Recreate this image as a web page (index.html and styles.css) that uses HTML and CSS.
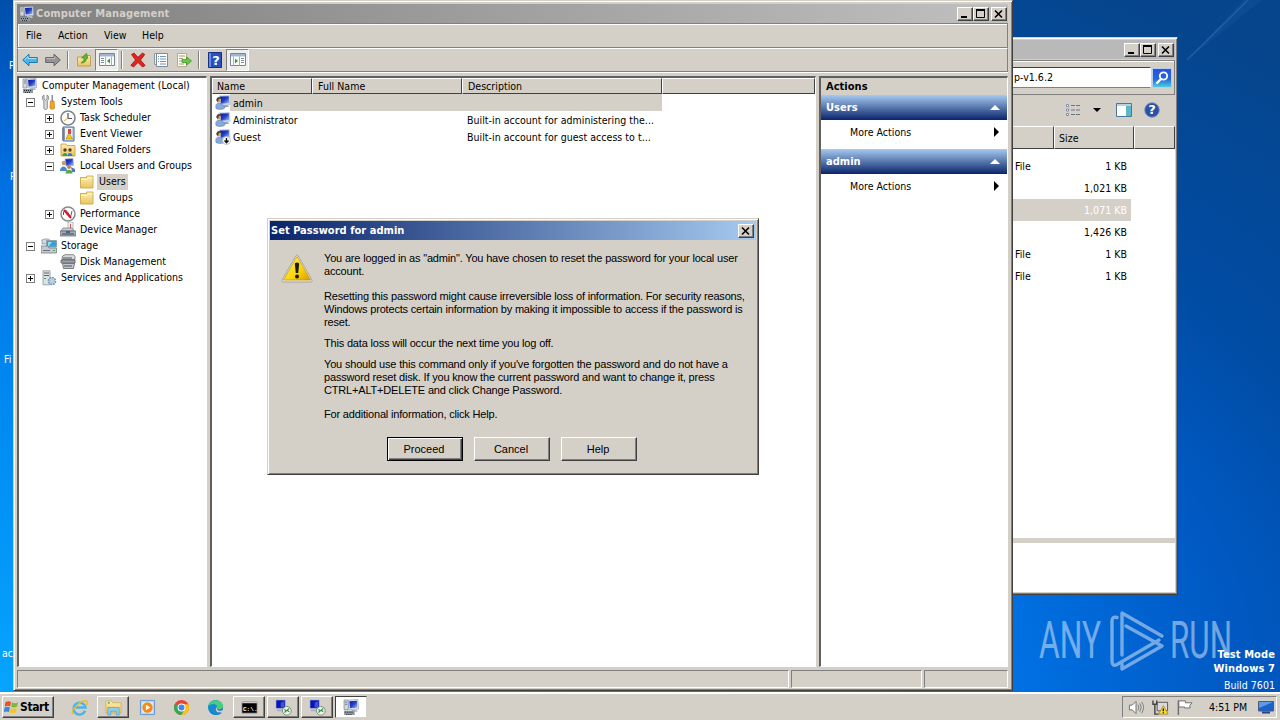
FILE: index.html
```
<!DOCTYPE html>
<html lang="en">
<head>
  <meta charset="utf-8">
  <title>Computer Management</title>
  <link rel="stylesheet" href="styles.css">
</head>
<body>
  <!-- shared icons -->
  <svg class="sprite" width="0" height="0">
    <defs>
      <linearGradient id="g-blue" x1="0" y1="0" x2="1" y2="1">
        <stop offset="0" stop-color="#0a16a0"/><stop offset=".5" stop-color="#2340c8"/><stop offset="1" stop-color="#a9c8f8"/>
      </linearGradient>
      <linearGradient id="g-folder" x1="0" y1="0" x2="0" y2="1">
        <stop offset="0" stop-color="#fdeeb0"/><stop offset="1" stop-color="#eac562"/>
      </linearGradient>
      <linearGradient id="g-yellow" x1="0" y1="0" x2="1" y2="1">
        <stop offset="0" stop-color="#fff36a"/><stop offset=".6" stop-color="#fbd40c"/><stop offset="1" stop-color="#d69a00"/>
      </linearGradient>
      <linearGradient id="g-search" x1="0" y1="0" x2="0" y2="1">
        <stop offset="0" stop-color="#2a50dd"/><stop offset=".55" stop-color="#2467d8"/><stop offset="1" stop-color="#4ed3e4"/>
      </linearGradient>
      <linearGradient id="g-edge" x1="0" y1="0" x2="1" y2="1">
        <stop offset="0" stop-color="#1fa6e0"/><stop offset="1" stop-color="#0c55b4"/>
      </linearGradient>
    </defs>
    <symbol id="i-computer" viewBox="0 0 16 16">
      <path d="M1 1h4v9H1z" fill="#d4d8dd" stroke="#7b8490" stroke-width=".7"/>
      <path d="M2 3h2M2 5h2" stroke="#667" stroke-width=".8"/>
      <path d="M5 1l9-.5.6 9L6 10z" fill="#e6ebf4" stroke="#8a96aa" stroke-width=".6"/>
      <path d="M6 2l7.2-.4.3 6.6L6.7 8.6z" fill="url(#g-blue)"/>
      <path d="M8 10h5l1 2H8z" fill="#b6bcc6"/>
      <path d="M1 11h10v4H1z" fill="#8f969f"/>
      <path d="M2 12h1v1H2zM4 12h1v1H4zM6 12h1v1H6zM8 12h1v1H8zM3 14h1v1H3zM5 14h1v1H5zM7 14h1v1H7z" fill="#26303c"/>
    </symbol>
    <symbol id="i-tools" viewBox="0 0 16 16">
      <path d="M3 1v4l1.5 1.3L6 5V1c2 .8 2.4 4.500 .3 6V14c0 2-3.400 2-3.400 0V7C.8 5.500 1 1.800 3 1z" fill="#d9dcdf" stroke="#72787f" stroke-width=".8"/>
      <path d="M10.500 1h1.500v6h-1.500z" fill="#8a9097"/>
      <path d="M9.500 7h3.500l.5 7c0 1.500-4.500 1.500-4.500 0z" fill="#f5a623" stroke="#c76f08" stroke-width=".7"/>
    </symbol>
    <symbol id="i-clock" viewBox="0 0 16 16">
      <circle cx="8" cy="8" r="7" fill="#fbfbf6" stroke="#7d848c" stroke-width="1.600"/>
      <path d="M8 3v5.500h4" fill="none" stroke="#4c5560" stroke-width="1.200"/>
      <path d="M8 8L4 11" stroke="#e0a84c" stroke-width="1"/>
    </symbol>
    <symbol id="i-event" viewBox="0 0 16 16">
      <path d="M3 1h11v14H3z" fill="#bcd3f0" stroke="#4a6d9d"/>
      <path d="M5 2h7v12H5z" fill="#e8f0fa"/>
      <path d="M2 3h3M2 5h3M2 7h3M2 9h3M2 11h3M2 13h3" stroke="#56616e" stroke-width="1"/>
      <path d="M8 3h3v5H8z" fill="#e04030"/>
      <path d="M6 13l3-6 3.500 6z" fill="#f6c515" stroke="#a97d00" stroke-width=".6"/>
    </symbol>
    <symbol id="i-shared" viewBox="0 0 16 16">
      <path d="M1 2h5l1 1.500h8V14H1z" fill="url(#g-folder)" stroke="#c79a34" stroke-width=".8"/>
      <circle cx="5" cy="8" r="1.700" fill="#5a3c20"/><path d="M2.500 14c0-4 5-4 5 0z" fill="#35a04e"/>
      <circle cx="10" cy="8" r="1.700" fill="#5a3c20"/><path d="M7.500 14c0-4 5-4 5 0z" fill="#3b76d6"/>
    </symbol>
    <symbol id="i-localusers" viewBox="0 0 16 16">
      <path d="M5 1l8-.5.5 7L6 8z" fill="url(#g-blue)" stroke="#a3b2cc" stroke-width=".8"/>
      <circle cx="4" cy="5" r="2.300" fill="#c79a63"/>
      <path d="M0 13c0-6 7-6 7 0z" fill="#4a85d5"/>
      <circle cx="9" cy="9" r="2" fill="#b8864f"/>
      <path d="M5.500 15.500c0-5 7-5 7 0z" fill="#58a846"/>
      <path d="M11 9l4 2v3h-3z" fill="#5675c8"/>
    </symbol>
    <symbol id="i-folder" viewBox="0 0 16 16">
      <path d="M1.500 3.500h6V2h6.500v12H1.500z" fill="url(#g-folder)" stroke="#cda849" stroke-width=".9"/>
      <path d="M2 5.500h6l1-1.500h4.500" fill="none" stroke="#fff8d8" stroke-width=".9"/>
    </symbol>
    <symbol id="i-perf" viewBox="0 0 16 16">
      <circle cx="8" cy="8" r="7" fill="#fff" stroke="#858b91" stroke-width="1.500"/>
      <path d="M3.500 9V6c1-2 3-2 4 0l3 5 1.500-6" fill="none" stroke="#8a4750" stroke-width="1"/>
      <path d="M4 4l7 8" stroke="#cf1a2c" stroke-width="2"/>
    </symbol>
    <symbol id="i-device" viewBox="0 0 16 16">
      <path d="M8 0h5v8H8z" fill="#f4f4f4" stroke="#9a9fa5" stroke-width=".7"/>
      <path d="M10 2h1v4h-1z" fill="#d05050"/>
      <path d="M3 6h9l2 3H1z" fill="#c9cdd2" stroke="#6d747c" stroke-width=".7"/>
      <path d="M0 9h16v5H0z" fill="#a4abb4" stroke="#59616b" stroke-width=".7"/>
      <path d="M2 12h12" stroke="#3d454e"/><path d="M6 9h4v2H6z" fill="#40688e"/>
    </symbol>
    <symbol id="i-storage" viewBox="0 0 16 16">
      <path d="M1 2c3-1.500 6-1.500 8 0v4H1z" fill="#d3d8dc" stroke="#7e868e" stroke-width=".7"/>
      <path d="M5.500 2.500h10V9h-10z" fill="#37a0d8" stroke="#90a0ac"/>
      <path d="M7 4l4 0-3 4H7z" fill="#8ddcf4"/>
      <path d="M0 8h7l1 2h7.500v5H0z" fill="#c6cacf" stroke="#747c84" stroke-width=".8"/>
      <path d="M2 12.500h7" stroke="#68707a"/><path d="M12 12h2v1h-2z" fill="#3cb64b"/>
    </symbol>
    <symbol id="i-disk" viewBox="0 0 16 16">
      <path d="M2.500 2L5 .7h8.500L15 2.500v3H2z" fill="#d8dadd" stroke="#666d75" stroke-width=".8"/>
      <path d="M1 6h14v3H1z" fill="#9fa4aa" stroke="#555c64" stroke-width=".8"/>
      <path d="M2.500 9.500h12l-1 5h-10z" fill="#c4c8cc" stroke="#5b6269" stroke-width=".8"/>
      <path d="M3 4h9M4 12h8" stroke="#4c535a"/>
    </symbol>
    <symbol id="i-services" viewBox="0 0 16 16">
      <path d="M2 .8h7v14H2z" fill="#dde1e5" stroke="#8c949c" stroke-width=".8"/>
      <path d="M3 3h5M3 5.500h5" stroke="#5d656e"/>
      <path d="M3 8h2v1H3z" fill="#49a050"/>
      <circle cx="11" cy="11" r="3.400" fill="#c8dcec" stroke="#7899b6" stroke-width="1.800" stroke-dasharray="1.800 .8"/>
      <circle cx="11" cy="11" r="1.200" fill="#fff" stroke="#7899b6" stroke-width=".6"/>
    </symbol>
    <symbol id="i-user" viewBox="0 0 16 16">
      <path d="M4 1l10.500-.5.5 9-9 .5z" fill="#dce4f2" stroke="#a9b6cc" stroke-width=".6"/>
      <path d="M5 1.600l8.800-.3.300 7L6 8.800z" fill="url(#g-blue)"/>
      <path d="M8 10h5l1 2H8z" fill="#9aa5b8"/>
      <circle cx="3.800" cy="5" r="2.200" fill="#c8a07a"/>
      <path d="M1.300 5.500c0-4.500 5-4.300 5-1.500L4 3.800 2.800 7z" fill="#4e4438"/>
      <path d="M1 13.500C0 8.500 3 7.500 5 8l5 3.500c1 3-6 3.700-9 2z" fill="#86a9dc" stroke="#6180b2" stroke-width=".6"/>
    </symbol>
    <symbol id="i-guest" viewBox="0 0 16 16">
      <use href="#i-user"/>
      <circle cx="11.500" cy="11.500" r="4" fill="#fff" stroke="#a8a8a8" stroke-width=".7"/>
      <path d="M11.500 9v4.500M9.500 11.500l2 2.200 2-2.200" fill="none" stroke="#111" stroke-width="1.400"/>
    </symbol>
    <symbol id="i-back" viewBox="0 0 16 16">
      <path d="M.7 8L7 2.200v3.300h8.300v5H7v3.300z" fill="#45b7ee" stroke="#1770a8" stroke-width=".9"/>
      <path d="M2.500 7.500L6 4.500v2h8.500" fill="none" stroke="#b1e6ff" stroke-width=".9"/>
    </symbol>
    <symbol id="i-forward" viewBox="0 0 16 16">
      <path d="M15.300 8L9 2.200v3.300H.7v5H9v3.300z" fill="#949494" stroke="#5c5c5c" stroke-width=".9"/>
      <path d="M1.500 6.500h8.300v-2" fill="none" stroke="#c4c4c4" stroke-width=".9"/>
    </symbol>
    <symbol id="i-up" viewBox="0 0 16 16">
      <path d="M1.500 5h5L8 3.500h6.500V14h-13z" fill="url(#g-folder)" stroke="#bd9a45" stroke-width=".9"/>
      <path d="M5 11c2.500-1.500 3-3 3-5H5.500L10.500 1.200l1.500 5h-1.500c0 3-2 5-5.500 4.800z" fill="#5cb531" stroke="#3a8418" stroke-width=".6"/>
    </symbol>
    <symbol id="i-pane-left" viewBox="0 0 16 16">
      <path d="M.5 1.500h15v12H.5z" fill="#fff" stroke="#74879c"/>
      <path d="M1 2h14v2.500H1z" fill="#9fb6d2"/>
      <path d="M2 6.500h3M2 8.500h3M2 10.500h3" stroke="#7e8fa3"/>
      <path d="M6.500 4.500v9M12.500 4.500v9" stroke="#a3b0c0"/>
      <path d="M11 6.500v5L8 9z" fill="#2f9e2f"/>
    </symbol>
    <symbol id="i-pane-right" viewBox="0 0 16 16">
      <path d="M.5 1.500h15v12H.5z" fill="#fff" stroke="#74879c"/>
      <path d="M1 2h14v2.500H1z" fill="#9fb6d2"/>
      <path d="M11 6.500h3M11 8.500h3M11 10.500h3" stroke="#7e8fa3"/>
      <path d="M9.500 4.500v9M3.500 4.500v9" stroke="#a3b0c0"/>
      <path d="M5 6.500v5L8 9z" fill="#2f9e2f"/>
    </symbol>
    <symbol id="i-delete" viewBox="0 0 16 16">
      <path d="M1.500 2.500L4 1l4 4.300L12.500 1l2.300 1.500L10.500 8l4.700 5.500L12.500 15 8 10.500 3.500 15 .8 13.300 5.500 8z" fill="#e02420" stroke="#9c0c0a" stroke-width=".7"/>
    </symbol>
    <symbol id="i-props" viewBox="0 0 16 16">
      <path d="M1.500 1.500h11v11h-11z" fill="#e8eef6" stroke="#8a9bb0"/>
      <path d="M3.500 1.500h11v13h-11z" fill="#fff" stroke="#7a8ca3"/>
      <path d="M5 4.500h1M7 4.500h6M5 7h1M7 7h6M5 9.500h1M7 9.500h6M7 12h6" stroke="#6f93bd"/>
    </symbol>
    <symbol id="i-export" viewBox="0 0 16 16">
      <path d="M1.500 1.500h9v13h-9z" fill="#fffdf2" stroke="#b8ad84"/>
      <path d="M3 4h6M3 6.500h4M3 9h3M3 12h5" stroke="#9c9c86"/>
      <path d="M6 7.500h4.500V4.800L15.500 9l-5 4.200v-2.700H6z" fill="#66c940" stroke="#3a9020" stroke-width=".7"/>
    </symbol>
    <symbol id="i-warning" viewBox="0 0 32 32">
      <path d="M15 3.500Q16 2 17 3.500L31 28Q31.500 30 30 30H2Q.5 30 1 28z" fill="#e8e6dc" stroke="#9c9a90" stroke-width=".8"/>
      <path d="M16 4.500L29.500 28H2.500z" fill="url(#g-yellow)" stroke="#c79600" stroke-width=".7"/>
      <path d="M13.800 11.500q2.200-2 4.400 0L17.200 21h-2.400z" fill="#1c1a10"/><circle cx="16" cy="24.500" r="2" fill="#1c1a10"/>
    </symbol>
    <symbol id="i-terminal" viewBox="0 0 18 18">
      <path d="M1 1h10v9H1z" fill="#0b17ac" stroke="#c3cbe4" stroke-width=".6"/>
      <path d="M6 4l4-2v7H6z" fill="#3954d6"/>
      <path d="M2 11h8v2H2z" fill="#aab0ba"/>
      <circle cx="12.500" cy="12.500" r="4.600" fill="#eaf3e6" stroke="#76807a" stroke-width=".9"/>
      <path d="M10 11l2 1.500-2 1.800M15 10l-2 1.800 2 1.800" fill="none" stroke="#2e8b34" stroke-width="1.200"/>
    </symbol>
    <symbol id="i-min" viewBox="0 0 12 10"><path d="M2 8h6" stroke="#000" stroke-width="2"/></symbol>
    <symbol id="i-max" viewBox="0 0 12 10"><path d="M1.500 .5h8v8h-8z" fill="none" stroke="#000"/><path d="M1 1h9" stroke="#000" stroke-width="2"/></symbol>
    <symbol id="i-close" viewBox="0 0 12 10"><path d="M2 1.500l7 7M9 1.500l-7 7" stroke="#000" stroke-width="1.600"/></symbol>
  </svg>

  <div class="desktop">
    <svg class="wallpaper-rays" viewBox="0 0 1280 692">
      <path d="M1187 60L1248 0" stroke="#4d8cc8" stroke-opacity=".3" stroke-width="1.500"/>
      <path d="M1187 60L1262 0H1244z" fill="#4d8cc8" fill-opacity=".1"/>
    </svg>
    <span class="desk-label label-1">P</span>
    <span class="desk-label label-2">P</span>
    <span class="desk-label label-3">Fi</span>
    <span class="desk-label label-4">ac</span>

    <svg class="watermark" viewBox="0 0 200 66">
      <g fill="#fff">
        <text x="4" y="50" textLength="62" lengthAdjust="spacingAndGlyphs">ANY</text>
        <text x="135" y="50" textLength="62" lengthAdjust="spacingAndGlyphs">RUN</text>
      </g>
      <g fill="none" stroke="#fff" stroke-width="3.400" stroke-linejoin="round" stroke-linecap="round">
        <path d="M82 9.500Q77 8 77 13V53Q77 59 82 56.500L124 32"/>
        <path d="M87 47V5L127 28"/>
        <path d="M91 18L127 38L87 61V56"/>
      </g>
    </svg>

    <div class="build-info">
      <b>Test Mode</b>
      <b>Windows 7</b>
      <span>Build 7601</span>
    </div>

    <!-- file explorer behind -->
    <div class="window explorer">
      <div class="titlebar inactive">
        <div class="caption-buttons">
          <span class="cap"><svg><use href="#i-min"/></svg></span>
          <span class="cap"><svg><use href="#i-max"/></svg></span>
          <span class="cap cap-close"><svg><use href="#i-close"/></svg></span>
        </div>
      </div>
      <div class="address-row">
        <div class="address">p-v1.6.2</div>
        <svg class="search-btn" viewBox="0 0 20 20">
          <path d="M.5 .5h19v19H.5z" fill="url(#g-search)" stroke="#b5cdf0"/>
          <circle cx="11.500" cy="8" r="3.700" fill="none" stroke="#fff" stroke-width="1.800"/>
          <path d="M9 11l-4 4" stroke="#fff" stroke-width="2.400" stroke-linecap="round"/>
        </svg>
      </div>
      <div class="explorer-tools">
        <svg class="view-icon" viewBox="0 0 16 14">
          <path d="M1.500 1.500h2v2h-2zM1.500 6h2v2h-2zM1.500 10.500h2v2h-2z" fill="#fff" stroke="#8290a8"/>
          <path d="M6 2.500h4M11 2.500h4M6 7h4M11 7h4M6 11.500h4M11 11.500h4" stroke="#6b7484"/>
        </svg>
        <svg class="drop-icon" viewBox="0 0 8 4"><path d="M0 0h8L4 4z"/></svg>
        <svg class="preview-icon" viewBox="0 0 16 14">
          <path d="M.5 .5h15v13H.5z" fill="#fff" stroke="#48799c"/>
          <path d="M1 1h14v2H1z" fill="#b4d2e8"/>
          <path d="M10 3h5v10h-5z" fill="#5cb8c8"/>
        </svg>
        <svg class="help-icon" viewBox="0 0 16 16">
          <circle cx="8" cy="8" r="7.300" fill="#2c50a8" stroke="#8195bd"/>
          <text x="8" y="12.300" text-anchor="middle" class="glyph-help">?</text>
        </svg>
      </div>
      <div class="explorer-head">
        <span class="col-type"></span><span class="col-size">Size</span><span class="col-rest"></span>
      </div>
      <div class="explorer-rows">
        <div class="file-row"><span>File</span><span>1 KB</span></div>
        <div class="file-row"><span></span><span>1,021 KB</span></div>
        <div class="file-row selected"><span></span><span>1,071 KB</span></div>
        <div class="file-row"><span></span><span>1,426 KB</span></div>
        <div class="file-row"><span>File</span><span>1 KB</span></div>
        <div class="file-row"><span>File</span><span>1 KB</span></div>
      </div>
      <div class="explorer-details"></div>
    </div>

    <!-- computer management -->
    <div class="window mmc">
      <div class="titlebar inactive">
        <svg class="ico"><use href="#i-computer"/></svg>
        <span class="title">Computer Management</span>
        <div class="caption-buttons">
          <span class="cap"><svg><use href="#i-min"/></svg></span>
          <span class="cap"><svg><use href="#i-max"/></svg></span>
          <span class="cap cap-close"><svg><use href="#i-close"/></svg></span>
        </div>
      </div>
      <div class="menubar">
        <span class="menu-file">File</span><span class="menu-action">Action</span><span class="menu-view">View</span><span>Help</span>
      </div>
      <div class="toolbar">
        <span class="tool"><svg class="ico"><use href="#i-back"/></svg></span>
        <span class="tool"><svg class="ico"><use href="#i-forward"/></svg></span>
        <i class="sep"></i>
        <span class="tool"><svg class="ico"><use href="#i-up"/></svg></span>
        <span class="tool pressed"><svg class="ico"><use href="#i-pane-left"/></svg></span>
        <i class="sep"></i>
        <span class="tool"><svg class="ico"><use href="#i-delete"/></svg></span>
        <span class="tool"><svg class="ico"><use href="#i-props"/></svg></span>
        <span class="tool"><svg class="ico"><use href="#i-export"/></svg></span>
        <i class="sep"></i>
        <span class="tool">
          <svg class="ico" viewBox="0 0 16 16">
            <path d="M1.500 .5h13v15h-13z" fill="#2950b8" stroke="#14307e"/>
            <path d="M2 1h2v14H2z" fill="#6a8ce0"/>
            <text x="9" y="13" text-anchor="middle" class="glyph-help">?</text>
          </svg>
        </span>
        <span class="tool pressed"><svg class="ico"><use href="#i-pane-right"/></svg></span>
      </div>

      <div class="panes">
        <div class="pane tree">
          <div class="node root"><svg class="ico"><use href="#i-computer"/></svg><span>Computer Management (Local)</span></div>
          <div class="node l1"><i class="box minus"></i><svg class="ico"><use href="#i-tools"/></svg><span>System Tools</span></div>
          <div class="node l2"><i class="box plus"></i><svg class="ico"><use href="#i-clock"/></svg><span>Task Scheduler</span></div>
          <div class="node l2"><i class="box plus"></i><svg class="ico"><use href="#i-event"/></svg><span>Event Viewer</span></div>
          <div class="node l2"><i class="box plus"></i><svg class="ico"><use href="#i-shared"/></svg><span>Shared Folders</span></div>
          <div class="node l2"><i class="box minus"></i><svg class="ico"><use href="#i-localusers"/></svg><span>Local Users and Groups</span></div>
          <div class="node l3"><svg class="ico"><use href="#i-folder"/></svg><span class="current">Users</span></div>
          <div class="node l3"><svg class="ico"><use href="#i-folder"/></svg><span>Groups</span></div>
          <div class="node l2"><i class="box plus"></i><svg class="ico"><use href="#i-perf"/></svg><span>Performance</span></div>
          <div class="node l2"><i class="box none"></i><svg class="ico"><use href="#i-device"/></svg><span>Device Manager</span></div>
          <div class="node l1"><i class="box minus"></i><svg class="ico"><use href="#i-storage"/></svg><span>Storage</span></div>
          <div class="node l2"><i class="box none"></i><svg class="ico"><use href="#i-disk"/></svg><span>Disk Management</span></div>
          <div class="node l1"><i class="box plus"></i><svg class="ico"><use href="#i-services"/></svg><span>Services and Applications</span></div>
        </div>

        <div class="pane list">
          <div class="list-head">
            <span class="c-name">Name</span><span class="c-full">Full Name</span><span class="c-desc">Description</span><span class="c-rest"></span>
          </div>
          <div class="list-row selected"><svg class="ico"><use href="#i-user"/></svg><span class="u-name">admin</span><span></span></div>
          <div class="list-row"><svg class="ico"><use href="#i-user"/></svg><span class="u-name">Administrator</span><span class="u-desc">Built-in account for administering the...</span></div>
          <div class="list-row"><svg class="ico"><use href="#i-guest"/></svg><span class="u-name">Guest</span><span class="u-desc">Built-in account for guest access to t...</span></div>
        </div>

        <div class="pane actions">
          <div class="actions-title">Actions</div>
          <div class="actions-group"><span>Users</span><svg class="tri-up" viewBox="0 0 10 5"><path d="M0 5L5 0l5 5z" fill="#fff"/></svg></div>
          <div class="actions-item"><span>More Actions</span><svg class="tri-right" viewBox="0 0 5 10"><path d="M0 0l5 5-5 5z"/></svg></div>
          <div class="actions-group"><span>admin</span><svg class="tri-up" viewBox="0 0 10 5"><path d="M0 5L5 0l5 5z" fill="#fff"/></svg></div>
          <div class="actions-item"><span>More Actions</span><svg class="tri-right" viewBox="0 0 5 10"><path d="M0 0l5 5-5 5z"/></svg></div>
        </div>
      </div>

      <div class="statusbar"><span class="st-main"></span><span class="st-mid"></span><span class="st-end"></span></div>
    </div>

    <!-- password dialog -->
    <div class="window dialog">
      <div class="titlebar active">
        <span class="title">Set Password for admin</span>
        <div class="caption-buttons"><span class="cap"><svg><use href="#i-close"/></svg></span></div>
      </div>
      <div class="dialog-body">
        <svg class="warning"><use href="#i-warning"/></svg>
        <div class="message">
          <p>You are logged in as "admin". You have chosen to reset the password for your local user<br>account.</p>
          <p>Resetting this password might cause irreversible loss of information. For security reasons,<br>Windows protects certain information by making it impossible to access if the password is<br>reset.</p>
          <p class="tight">This data loss will occur the next time you log off.</p>
          <p class="tight">You should use this command only if you've forgotten the password and do not have a<br>password reset disk. If you know the current password and want to change it, press<br>CTRL+ALT+DELETE and click Change Password.</p>
          <p class="last">For additional information, click Help.</p>
        </div>
      </div>
      <div class="dialog-buttons">
        <button class="default">Proceed</button>
        <button>Cancel</button>
        <button>Help</button>
      </div>
    </div>
  </div>

  <div class="taskbar">
    <div class="start">
      <svg viewBox="0 0 16 16">
        <path d="M1.500 3Q4.500 1 7.500 2.700L6.500 7.500Q4 6 .8 7.700z" fill="#e8502a"/>
        <path d="M8.500 3Q11.500 5 15 2.800L14 7.500Q11 9.500 7.600 7.800z" fill="#7db93a"/>
        <path d="M.6 8.700Q3.500 7 6.300 8.600L5.300 13.300Q2.500 12-.3 13.500z" fill="#3a86d8"/>
        <path d="M7.300 9Q10.500 11 13.700 8.800L12.700 13.500Q9.500 15.500 6.300 13.700z" fill="#f8c326"/>
      </svg>
      <b>Start</b>
    </div>
    <div class="task">
      <svg viewBox="0 0 18 18">
        <path d="M15 12.500A6.300 6.300 0 1 1 15.300 9H5" fill="none" stroke="#4cb4e6" stroke-width="2.600"/>
        <path d="M2 16C-1 13 10 1 16 2c2 .7 1 3-.3 5" fill="none" stroke="#efb92c" stroke-width="1.500"/>
      </svg>
    </div>
    <div class="task raised">
      <svg viewBox="0 0 18 18">
        <path d="M1 2h6l1 2h9v11H1z" fill="url(#g-folder)" stroke="#d3ab4c" stroke-width=".8"/>
        <path d="M3 3h2v2H3z" fill="#58b368"/>
        <path d="M3 9h12v8h-3v-4H6v4H3z" fill="#8fcdea" stroke="#5aa5cc" stroke-width=".8"/>
      </svg>
    </div>
    <div class="task">
      <svg viewBox="0 0 18 18">
        <path d="M1.500 1.500h15v15h-15z" fill="#cfe3f4" stroke="#5c97cc"/>
        <path d="M3 3h12v12H3z" fill="#e9f3fb" stroke="#9fc3e0" stroke-width=".7"/>
        <circle cx="9" cy="9" r="5.500" fill="#f68a16"/>
        <path d="M7.300 6v6l4.700-3z" fill="#fff"/>
      </svg>
    </div>
    <div class="task">
      <svg viewBox="0 0 18 18">
        <circle cx="9" cy="9" r="8" fill="#ea4335"/>
        <path d="M9 9L2.100 5A8 8 0 0 0 8.800 17L12.500 11z" fill="#34a853"/>
        <path d="M9 5.500h7.200A8 8 0 0 1 8.800 17L12.300 11z" fill="#fbc116"/>
        <circle cx="9" cy="9" r="4.200" fill="#fff"/><circle cx="9" cy="9" r="3.200" fill="#4285f4"/>
      </svg>
    </div>
    <div class="task">
      <svg viewBox="0 0 18 18">
        <circle cx="9" cy="9" r="8" fill="url(#g-edge)"/>
        <path d="M1.200 8C2 0 16.500-1 17 8c0 4-6.500 4-6.300 1.500C11.500 5 5 4 1.200 8z" fill="#48cf7c"/>
        <path d="M1.200 8C4.500 4.500 9.500 5 10.500 8c-2 0-3 4 .5 6 2 1 4 .5 5 0-3 4.500-10 3.500-11-1" fill="#168bd2"/>
        <path d="M10.700 8.500c-1.200 2 .8 4 3 4l2.500-.7L17 14l-5 .3C8.500 13 8.700 9 10.700 8.500z" fill="#d6d0c8"/>
      </svg>
    </div>
    <div class="task raised">
      <svg viewBox="0 0 18 18">
        <path d="M1 3h16v12H1z" fill="#000" stroke="#9aa0a8" stroke-width=".8"/>
        <path d="M1 3h16v1.500H1z" fill="#c8ccd2"/>
        <text x="2" y="12.500" class="glyph-cmd">C:\.</text>
      </svg>
    </div>
    <div class="task raised"><svg><use href="#i-terminal"/></svg></div>
    <div class="task raised"><svg><use href="#i-terminal"/></svg></div>
    <div class="task sunken"><svg><use href="#i-computer"/></svg></div>

    <div class="tray">
      <svg viewBox="0 0 18 18">
        <path d="M1.500 6.500h3l4-4v13l-4-4h-3z" fill="#fff" stroke="#6c6c6c"/>
        <path d="M10.500 6q2 3 0 6M12.500 4.500q3 4.500 0 9M14.500 3q4 6 0 12" fill="none" stroke="#7c7c7c"/>
      </svg>
      <svg viewBox="0 0 18 18">
        <path d="M5.500 3.500h11v9h-11z" fill="#d9d9d9" stroke="#555"/>
        <path d="M1 1.500v4h4v-4M3 5.500V16h4" fill="none" stroke="#444" stroke-width="1.500"/>
        <path d="M12 7l5 9H7z" fill="#ffd92c" stroke="#9a7a00" stroke-width=".7"/>
        <path d="M12 10v3M12 14v1.200" stroke="#000" stroke-width="1.300"/>
      </svg>
      <svg viewBox="0 0 18 18">
        <path d="M2.500 1.500V17" stroke="#6c6c6c" stroke-width="1.500"/>
        <path d="M3 2h7v2h7l-2.500 3 .5 2.500H9V8.500H3z" fill="#fff" stroke="#6c6c6c"/>
      </svg>
      <span class="clock">4:51 PM</span>
      <svg class="show-desktop" viewBox="0 0 16 14">
        <path d="M.5 1.500h15v9.500H.5z" fill="#1b63c6" stroke="#4a5a78"/>
        <path d="M1 2h14L1 8z" fill="#5d9ae8"/>
        <path d="M4 11.500h8v2H4z" fill="#20409a"/>
      </svg>
    </div>
  </div>
</body>
</html>
```
FILE: styles.css
```
* {
  box-sizing: border-box;
}

body {
  margin: 0;
  width: 1280px;
  height: 720px;
  overflow: hidden;
  font-family: "DejaVu Sans Condensed", "DejaVu Sans", sans-serif;
  font-stretch: condensed;
  font-size: 10.5px;
  letter-spacing: .03px;
  line-height: 13px;
  color: #000;
  display: flex;
  flex-direction: column;
}

svg {
  display: block;
  flex: none;
}

.sprite {
  position: absolute;
}

.ico {
  width: 16px;
  height: 16px;
}

.glyph-help {
  font: bold 13px "DejaVu Sans", sans-serif;
  fill: #fff;
}

.glyph-cmd {
  font: bold 6.5px "Liberation Mono", monospace;
  fill: #fff;
}

/* desktop */
.desktop {
  position: relative;
  height: 692px;
  overflow: hidden;
  background: radial-gradient(1500px 750px at 0 100%, #06a4ff 0, #0088f0 40%, #0070e2 68%, #005ac4 82%, #004ca4 95%, #06458c 120%);
}

.wallpaper-rays {
  position: absolute;
  width: 1280px;
  height: 692px;
}

.desk-label {
  position: absolute;
  color: #fff;
}

.label-1 { left: 9px; top: 59px; }
.label-2 { left: 10px; top: 170px; }
.label-3 { left: 4px; top: 353px; }
.label-4 { left: 2px; top: 647px; }

.watermark {
  position: absolute;
  left: 1035px;
  top: 608px;
  width: 200px;
  height: 66px;
  opacity: .45;
}

.watermark text {
  font: 400 51px Roboto, sans-serif;
  letter-spacing: 0;
}

.build-info {
  position: absolute;
  right: 5px;
  top: 648px;
  display: flex;
  flex-direction: column;
  align-items: flex-end;
  line-height: 14px;
  color: #fff;
}

.build-info b {
  font-size: 11px;
  letter-spacing: .1px;
}

.build-info span {
  margin-top: 2px;
}

/* windows */
.window {
  position: absolute;
  display: flex;
  flex-direction: column;
  padding: 2px;
  background: #d4d0c8;
  border: 1px solid #d4d0c8;
  border-right-color: #404040;
  border-bottom-color: #404040;
  box-shadow: inset 1px 1px #fff, inset -1px -1px #808080;
}

.titlebar {
  display: flex;
  align-items: center;
  flex: none;
  height: 19px;
  color: #fff;
  font-weight: bold;
  font-size: 11px;
}

.titlebar.inactive {
  color: #d4d0c8;
  background: linear-gradient(to right, #808080, #c0c0c0);
}

.titlebar.active {
  background: linear-gradient(to right, #0a246a, #a6caf0);
}

.caption-buttons {
  display: flex;
  margin-left: auto;
  padding-right: 1px;
}

.cap {
  width: 16px;
  height: 14px;
  padding: 1px;
  background: #d4d0c8;
  border: 1px solid #fff;
  border-right-color: #404040;
  border-bottom-color: #404040;
  box-shadow: inset -1px -1px #808080;
}

.cap svg {
  width: 12px;
  height: 10px;
}

.cap-close {
  margin-left: 2px;
}

/* explorer */
.explorer {
  left: 900px;
  top: 37px;
  width: 278px;
  height: 558px;
}

.explorer .titlebar.inactive {
  background: #b9b9b9;
}

.address-row {
  display: flex;
  align-items: center;
  flex: none;
  height: 35px;
  margin-top: 1px;
  border: 1px solid #808080;
  box-shadow: inset 1px 1px #fff;
}

.address {
  flex: 1;
  height: 21px;
  padding: 3px 0 0 109px;
  background: #fff;
  border: 1px solid #808080;
  border-top: 1px solid #404040;
  border-right-color: #fff;
}

.search-btn {
  width: 20px;
  height: 20px;
  margin: 0 2px 0 1px;
}

.explorer-tools {
  display: flex;
  align-items: center;
  justify-content: flex-end;
  flex: none;
  height: 31px;
  padding: 0 15px 2px 0;
}

.view-icon { width: 16px; height: 14px; }
.drop-icon { width: 8px; height: 4px; margin: 0 15px 0 12px; }
.preview-icon { width: 16px; height: 14px; margin-right: 12px; }
.help-icon { width: 16px; height: 16px; }

.explorer-head {
  display: flex;
  flex: none;
  height: 23px;
}

.explorer-head span {
  padding: 5px 4px;
  border: 1px solid #fff;
  border-right-color: #404040;
  border-bottom-color: #404040;
}

.col-type { width: 151px; }
.col-size { width: 80px; }
.col-rest { flex: 1; }

.explorer-rows {
  flex: 1;
  padding-top: 6px;
  background: #fff;
}

.file-row {
  display: flex;
  justify-content: space-between;
  width: 228px;
  height: 22px;
  padding: 5px 4px 0 112px;
}

.file-row.selected {
  color: #fff;
  background: #d4d0c8;
}

.explorer-details {
  flex: none;
  height: 54px;
  background: #fff;
  border-top: 5px solid #d4d0c8;
}

/* computer management */
.mmc {
  left: 13px;
  top: 0;
  width: 1000px;
  height: 691px;
  padding: 3px 4px 2px 3px;
}

.mmc .titlebar {
  padding-left: 2px;
}

.mmc .title {
  margin-left: 1px;
  letter-spacing: .12px;
}

.menubar {
  display: flex;
  align-items: center;
  flex: none;
  height: 25px;
  padding-left: 8px;
  border: 1px solid #808080;
  box-shadow: inset 1px 1px #fff;
}

.menu-file { width: 32px; }
.menu-action { width: 46px; }
.menu-view { width: 38px; }

.toolbar {
  display: flex;
  align-items: center;
  flex: none;
  height: 24px;
  border: 1px solid #808080;
  border-top: 1px solid #fff;
  box-shadow: 0 1px #fff;
}

.tool {
  display: flex;
  align-items: center;
  justify-content: center;
  width: 23px;
  height: 22px;
}

.tool.pressed {
  background: #f0eeea;
  border: 1px solid #808080;
  border-right-color: #fff;
  border-bottom-color: #fff;
}

.sep {
  width: 2px;
  height: 18px;
  margin: 0 3px;
  border-left: 1px solid #808080;
  border-right: 1px solid #fff;
}

.panes {
  display: flex;
  gap: 3px;
  flex: 1;
  min-height: 0;
  margin-top: 4px;
}

.pane {
  background: #fff;
  border: 1px solid #fff;
  border-top: 2px solid #606060;
  border-left: 2px solid #606060;
  overflow: hidden;
}

.tree {
  width: 190px;
}

.list {
  width: 606px;
}

.actions {
  flex: 1;
}

.node {
  display: flex;
  align-items: center;
  height: 16px;
  white-space: nowrap;
}

.node span {
  margin-left: 2px;
  padding: 1px 2px 2px;
}

.root { padding-left: 3px; }
.l1 { padding-left: 7px; }
.l2 { padding-left: 26px; }
.l3 { padding-left: 60px; }

.current {
  background: #d4d0c8;
}

.box {
  width: 9px;
  height: 9px;
  margin-right: 6px;
  border: 1px solid #808080;
  background: linear-gradient(#000, #000) center / 5px 1px no-repeat;
}

.box.plus {
  background: linear-gradient(#000, #000) center / 5px 1px no-repeat, linear-gradient(#000, #000) center / 1px 5px no-repeat;
}

.box.none {
  visibility: hidden;
}

.list-head {
  display: flex;
  height: 16px;
  background: #d4d0c8;
}

.list-head span {
  padding: 1px 5px;
  border-top: 1px solid #fff;
  border-left: 1px solid #fff;
  border-right: 1px solid #404040;
  border-bottom: 1px solid #404040;
}

.list-head .c-name {
  width: 100px;
  padding-left: 4px;
}

.c-full { width: 150px; }
.c-desc { width: 200px; }
.c-rest { flex: 1; }

.list-row {
  display: flex;
  align-items: center;
  width: 450px;
  height: 17px;
  padding-left: 3px;
  white-space: nowrap;
}

.list-row span {
  padding-top: 1px;
}

.list-row.selected {
  background: linear-gradient(to right, #fff 18px, #d4d0c8 18px);
}

.list-row .u-name {
  width: 236px;
  padding-left: 2px;
}

.actions-title {
  height: 17px;
  padding: 2px 5px;
  font-weight: bold;
  font-size: 11px;
  background: #d4d0c8;
}

.actions-group {
  display: flex;
  align-items: center;
  justify-content: space-between;
  height: 25px;
  padding: 0 7px 0 5px;
  font-weight: bold;
  font-size: 11px;
  color: #fff;
  background: linear-gradient(#a6caf0, #0a246a);
}

.actions-item {
  display: flex;
  align-items: center;
  justify-content: space-between;
  height: 29px;
  padding: 0 8px 5px 29px;
}

.tri-up { width: 10px; height: 5px; }
.tri-right { width: 5px; height: 10px; }

.statusbar {
  display: flex;
  gap: 2px;
  flex: none;
  height: 18px;
  margin-top: 3px;
}

.statusbar span {
  border: 1px solid #808080;
  border-right-color: #fff;
  border-bottom-color: #fff;
}

.st-main { width: 772px; }
.st-mid { width: 131px; }
.st-end { flex: 1; }

/* dialog */
.dialog {
  left: 267px;
  top: 218px;
  width: 492px;
  height: 257px;
}

.dialog .title {
  padding-left: 1px;
}

.dialog .caption-buttons {
  padding-right: 2px;
}

.dialog-body {
  display: flex;
  padding: 12px 0 0 11px;
}

.warning {
  width: 32px;
  height: 32px;
}

.message {
  margin-left: 11px;
  font-family: "Liberation Sans", Arial, sans-serif;
  font-size: 11px;
  letter-spacing: -.18px;
  white-space: nowrap;
}

.message p {
  margin: 0 0 12px;
}

.message p + .tight {
  margin-top: -4px;
}

.message .last {
  margin-top: -1px;
}

.dialog-buttons {
  display: flex;
  gap: 11px;
  padding-left: 117px;
  margin-top: 4px;
}

.dialog-buttons button {
  width: 76px;
  height: 24px;
  padding: 0 2px 1px 0;
  font: 11px "Liberation Sans", Arial, sans-serif;
  color: #000;
  background: #d4d0c8;
  border: 1px solid #fff;
  border-right-color: #404040;
  border-bottom-color: #404040;
  box-shadow: inset -1px -1px #808080;
}

.dialog-buttons .default {
  border-color: #000;
  box-shadow: inset 1px 1px #fff, inset -1px -1px #404040, inset -2px -2px #808080;
}

/* taskbar */
.taskbar {
  display: flex;
  align-items: center;
  flex: none;
  height: 28px;
  padding: 2px 3px 0 2px;
  background: #d4d0c8;
  box-shadow: inset 0 2px #fff;
}

.start {
  display: flex;
  align-items: center;
  width: 52px;
  height: 22px;
  margin-right: 9px;
  padding-left: 1px;
  font-size: 12px;
  letter-spacing: -.4px;
}

.start svg {
  width: 15px;
  height: 16px;
  margin-right: 1px;
}

.start,
.raised {
  border: 1px solid #fff;
  border-right-color: #404040;
  border-bottom-color: #404040;
  box-shadow: inset -1px -1px #808080;
}

.task {
  display: flex;
  align-items: center;
  justify-content: center;
  width: 32px;
  height: 22px;
  margin-right: 2px;
}

.task svg {
  width: 17px;
  height: 17px;
}

.sunken {
  background: #fff;
  border: 1px solid #404040;
  border-right-color: #d4d0c8;
  border-bottom-color: #d4d0c8;
}

.tray {
  display: flex;
  align-items: center;
  width: 155px;
  height: 22px;
  margin-left: auto;
  padding-left: 5px;
  border: 1px solid #808080;
  border-right-color: #fff;
  border-bottom-color: #fff;
}

.tray svg {
  width: 17px;
  height: 17px;
  margin-right: 7px;
}

.clock {
  margin: 0 11px 0 9px;
  white-space: nowrap;
}

.tray .show-desktop {
  width: 16px;
  height: 14px;
  margin: 0;
}
```
